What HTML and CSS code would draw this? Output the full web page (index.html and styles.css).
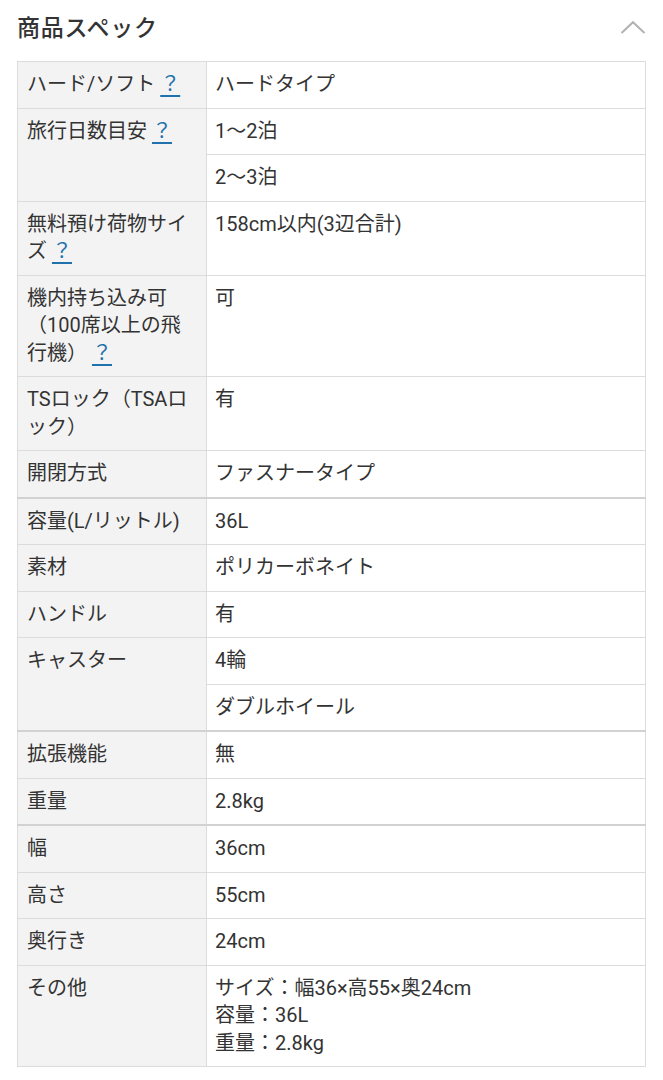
FILE: index.html
```html
<!DOCTYPE html>
<html lang="ja">
<head>
<meta charset="utf-8">
<link rel="stylesheet" href="styles.css">
</head>
<body>
<section class="spec">
  <header class="spec-head">
    <h2 class="spec-title">商品スペック</h2>
    <svg class="chev" width="26" height="16" viewBox="0 0 26 16"><path d="M1.5 14 L13 3.2 L24.5 14" fill="none" stroke="#b2b2b2" stroke-width="2"/></svg>
  </header>
  <table class="spec-table">
    <tbody>
      <tr><th>ハード/ソフト <a class="help">？</a></th><td>ハードタイプ</td></tr>
      <tr><th rowspan="2">旅行日数目安 <a class="help">？</a></th><td>1〜2泊</td></tr>
      <tr><td>2〜3泊</td></tr>
      <tr><th>無料預け荷物サイズ <a class="help">？</a></th><td>158cm以内(3辺合計)</td></tr>
      <tr><th>機内持ち込み可（100席以上の飛行機） <a class="help">？</a></th><td>可</td></tr>
      <tr><th>TSロック（TSAロック）</th><td>有</td></tr>
      <tr><th>開閉方式</th><td>ファスナータイプ</td></tr>
      <tr class="sep"><th>容量(L/リットル)</th><td>36L</td></tr>
      <tr><th>素材</th><td>ポリカーボネイト</td></tr>
      <tr><th>ハンドル</th><td>有</td></tr>
      <tr><th rowspan="2">キャスター</th><td>4輪</td></tr>
      <tr><td>ダブルホイール</td></tr>
      <tr class="sep"><th>拡張機能</th><td>無</td></tr>
      <tr><th>重量</th><td>2.8kg</td></tr>
      <tr class="sep"><th>幅</th><td>36cm</td></tr>
      <tr><th>高さ</th><td>55cm</td></tr>
      <tr><th>奥行き</th><td>24cm</td></tr>
      <tr><th>その他</th><td>サイズ：幅36×高55×奥24cm<br>容量：36L<br>重量：2.8kg</td></tr>
    </tbody>
  </table>
</section>
</body>
</html>
```
FILE: styles.css
```css
html, body {
  margin: 0;
  padding: 0;
  background: #ffffff;
}
body {
  font-family: Roboto, "Noto Sans CJK JP", sans-serif;
  color: #333333;
}
.spec {
  padding: 0 17px 0 17px;
}
.spec-head {
  display: flex;
  align-items: center;
  justify-content: space-between;
  height: 51px;
  margin-bottom: 10px;
}
.spec-title {
  margin: 0;
  font-size: 23px;
  font-weight: 500;
  color: #333333;
  letter-spacing: 0.7px;
}
.chev {
  margin-right: 0;
  margin-top: 3px;
}
.spec-table {
  width: 100%;
  border-collapse: collapse;
  font-size: 20px;
  line-height: 27.5px;
  border: 1px solid #dcdcdc;
}
.spec-table th,
.spec-table td {
  border: 1px solid #dcdcdc;
  padding: 9px 9px 9px 9px;
  text-align: left;
  vertical-align: top;
  font-weight: 400;
}
.spec-table th {
  width: 170px;
  background: #f3f3f3;
  color: #333333;
}
.spec-table td {
  background: #ffffff;
  padding-left: 8px;
}
.spec-table tr.sep th,
.spec-table tr.sep td {
  border-top: 2px solid #d2d2d2;
}
.help {
  color: #1f72ad;
  text-decoration: underline;
  text-decoration-thickness: 2px;
  text-underline-offset: 4px;
  cursor: pointer;
}
```
